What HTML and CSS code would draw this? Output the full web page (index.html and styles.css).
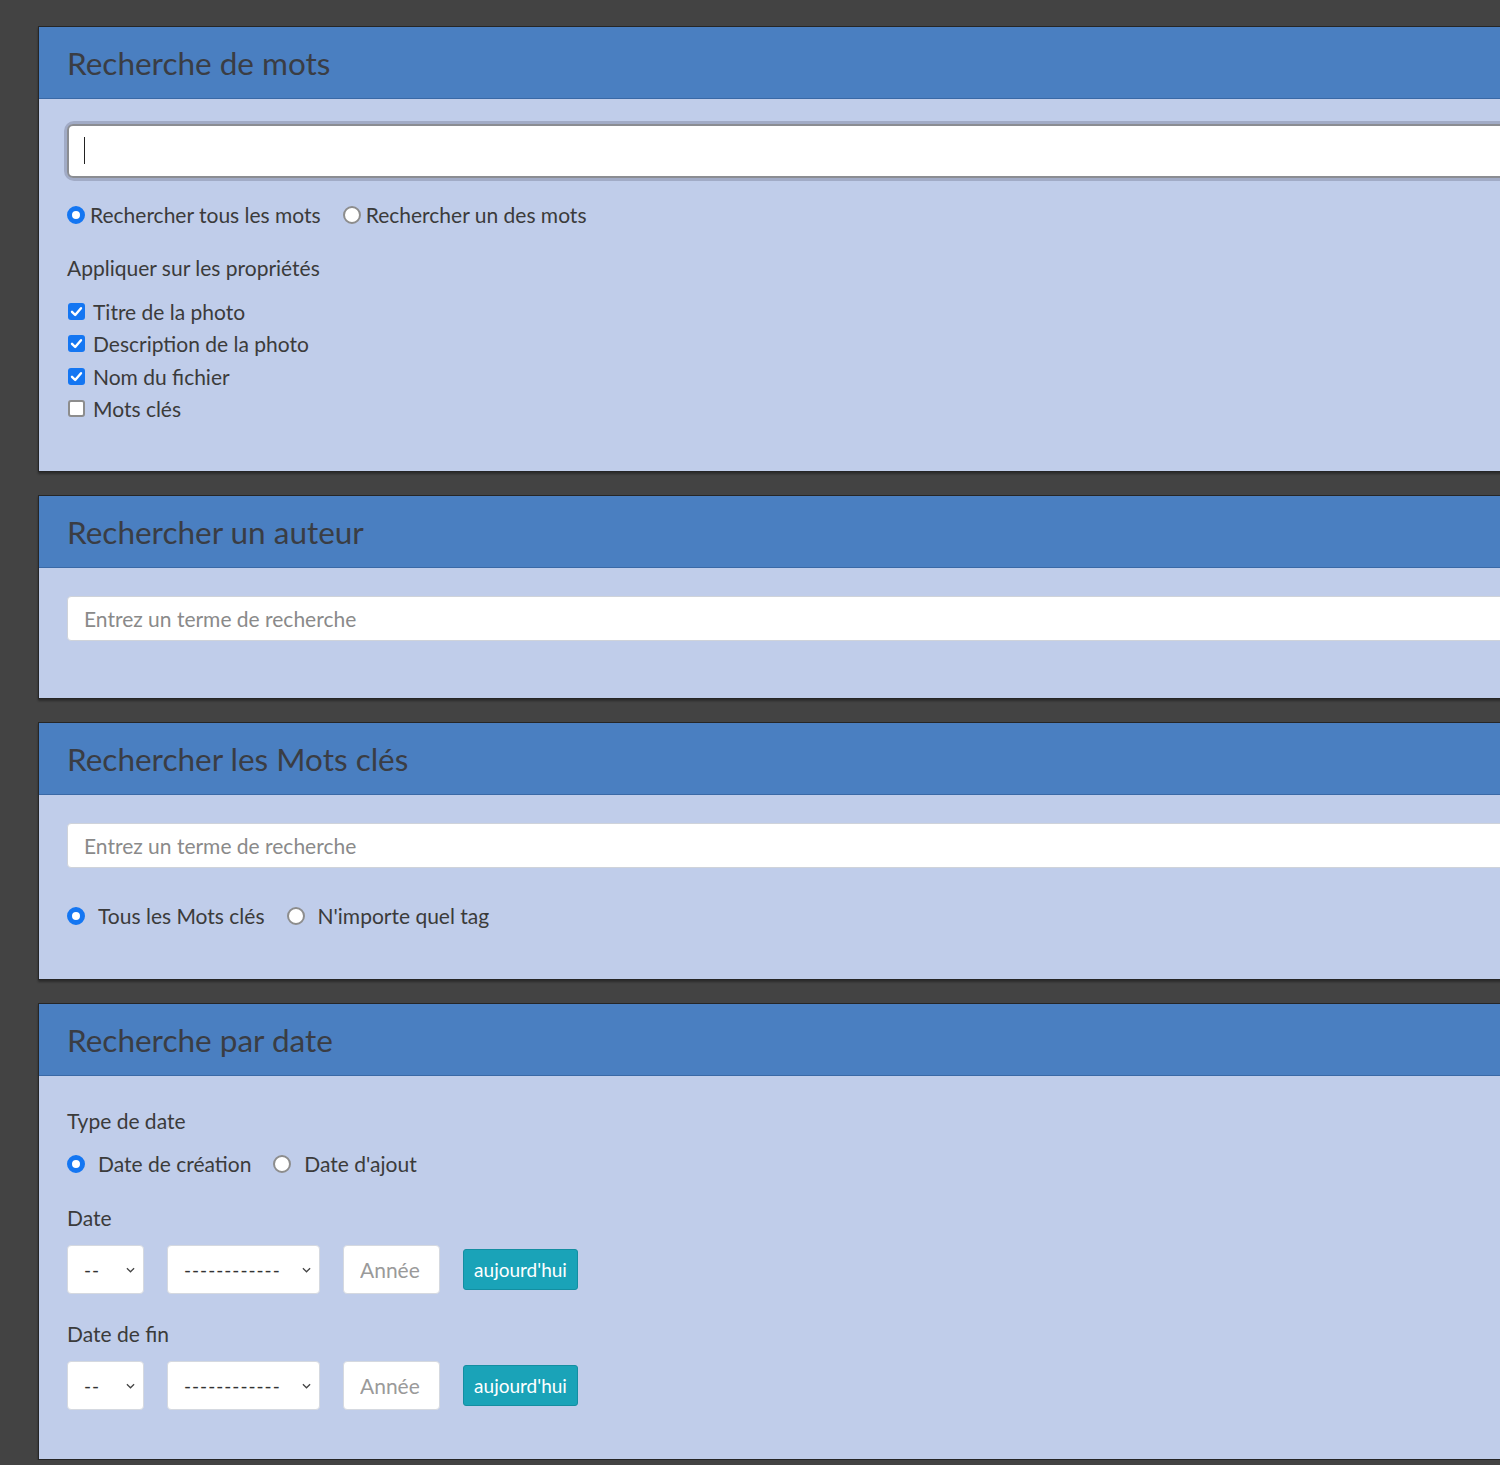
FILE: index.html
```html
<!DOCTYPE html>
<html lang="fr">
<head>
<meta charset="utf-8">
<title>Recherche</title>
<link rel="stylesheet" href="styles.css">
</head>
<body>
<div class="page">

  <section class="panel panel-words">
    <h2 class="panel-title">Recherche de mots</h2>
    <div class="panel-body">
      <div class="input-focus"><input class="text-input big" type="text" value=""><span class="caret"></span></div>
      <div class="radio-row row-words">
        <label class="opt tight"><input type="radio" name="w" checked><span>Rechercher tous les mots</span></label>
        <label class="opt tight"><input type="radio" name="w"><span>Rechercher un des mots</span></label>
      </div>
      <div class="field-label apply">Appliquer sur les propriétés</div>
      <div class="checks">
        <label class="check"><input type="checkbox" checked><span>Titre de la photo</span></label>
        <label class="check"><input type="checkbox" checked><span>Description de la photo</span></label>
        <label class="check"><input type="checkbox" checked><span>Nom du fichier</span></label>
        <label class="check"><input type="checkbox"><span>Mots clés</span></label>
      </div>
    </div>
  </section>

  <section class="panel panel-author">
    <h2 class="panel-title">Rechercher un auteur</h2>
    <div class="panel-body">
      <input class="text-input" type="text" placeholder="Entrez un terme de recherche">
    </div>
  </section>

  <section class="panel panel-tags">
    <h2 class="panel-title">Rechercher les Mots clés</h2>
    <div class="panel-body">
      <input class="text-input" type="text" placeholder="Entrez un terme de recherche">
      <div class="radio-row row-tags">
        <label class="opt"><input type="radio" name="t" checked><span>Tous les Mots clés</span></label>
        <label class="opt"><input type="radio" name="t"><span>N'importe quel tag</span></label>
      </div>
    </div>
  </section>

  <section class="panel panel-date">
    <h2 class="panel-title">Recherche par date</h2>
    <div class="panel-body">
      <div class="field-label first">Type de date</div>
      <div class="radio-row row-type">
        <label class="opt"><input type="radio" name="d" checked><span>Date de création</span></label>
        <label class="opt"><input type="radio" name="d"><span>Date d'ajout</span></label>
      </div>
      <div class="field-label date-label">Date</div>
      <div class="date-row">
        <select class="sel sel-day"><option>--</option></select>
        <select class="sel sel-month"><option>------------</option></select>
        <input class="year" type="text" placeholder="Année">
        <button class="today" type="button">aujourd'hui</button>
      </div>
      <div class="field-label end-label">Date de fin</div>
      <div class="date-row">
        <select class="sel sel-day"><option>--</option></select>
        <select class="sel sel-month"><option>------------</option></select>
        <input class="year" type="text" placeholder="Année">
        <button class="today" type="button">aujourd'hui</button>
      </div>
    </div>
  </section>

</div>
</body>
</html>
```
FILE: styles.css
```css
* { box-sizing: border-box; }

html, body {
  margin: 0;
  padding: 0;
  background: #434343;
  overflow: hidden;
}

body {
  font-family: Lato, "Open Sans", "Liberation Sans", sans-serif;
  color: #3b3b3b;
}

.page {
  display: flex;
  flex-direction: column;
  gap: 23px;
  padding: 26px 0 0 38px;
  margin-right: -20px;
}

.panel {
  background: #c0cdea;
  border: 1px solid #262626;
  border-right: none;
  box-shadow: 0 2px 2px rgba(0,0,0,0.35);
}

.panel-title {
  margin: 0;
  height: 72px;
  line-height: 72px;
  padding-left: 28px;
  background: #4a7fc1;
  border-bottom: 1px solid #3a69a6;
  font-size: 31.5px;
  font-weight: 400;
  color: #3a3d44;
}

.panel-body {
  padding: 0 0 0 28px;
  display: flex;
  flex-direction: column;
  align-items: flex-start;
}

/* Panel 1 */
.panel-words .panel-body { padding-top: 25px; padding-bottom: 46px; }

.input-focus {
  position: relative;
  width: 100%;
  border-radius: 7px;
  box-shadow: 0 0 0 3px #a1abc6;
}

.text-input {
  display: block;
  width: 100%;
  height: 45px;
  border: 1px solid #cfd3da;
  border-radius: 4px;
  background: #fff;
  padding: 0 16px;
  font-family: inherit;
  font-size: 21px;
  color: #333;
  outline: none;
}

.text-input::placeholder { color: #8a8a8a; }

.text-input.big {
  height: 54px;
  border: 2px solid #8b8d92;
  border-radius: 6px;
}

.caret {
  position: absolute;
  left: 17px;
  top: 13px;
  width: 1px;
  height: 27px;
  background: #222;
}

.radio-row {
  display: flex;
  align-items: center;
  height: 24px;
}

.row-words { margin-top: 25px; gap: 22px; }

.opt {
  display: flex;
  align-items: center;
  gap: 13px;
  font-size: 21px;
  line-height: 24px;
  white-space: nowrap;
}

.opt.tight { gap: 5px; }

.opt input {
  appearance: none;
  -webkit-appearance: none;
  margin: 0;
  width: 18px;
  height: 18px;
  border-radius: 50%;
  background: #fff;
  border: 2px solid #8d8d8d;
  flex: none;
}

.opt input:checked {
  border: 5px solid #1476f2;
  background: #fff;
}

.field-label {
  font-size: 21px;
  line-height: 24px;
  height: 24px;
}

.apply { margin-top: 29px; }

.checks {
  margin-top: 15px;
  display: flex;
  flex-direction: column;
}

.check {
  display: flex;
  align-items: center;
  gap: 8px;
  height: 32.5px;
  font-size: 21px;
  white-space: nowrap;
}

.check input {
  appearance: none;
  -webkit-appearance: none;
  margin: 0 0 0 1px;
  width: 17px;
  height: 17px;
  border-radius: 3px;
  background: #fff;
  border: 2px solid #8d8d8d;
  flex: none;
}

.check input:checked {
  border: none;
  background: #1476f2 url("data:image/svg+xml;utf8,<svg xmlns='http://www.w3.org/2000/svg' viewBox='0 0 17 17'><path d='M4 8.8 L7.2 12 L13 5.2' fill='none' stroke='white' stroke-width='2.4' stroke-linecap='round' stroke-linejoin='round'/></svg>") center/17px 17px no-repeat;
}

/* Panel 2 */
.panel-author .panel-body { padding-top: 28px; padding-bottom: 57px; }

/* Panel 3 */
.panel-tags .panel-body { padding-top: 28px; padding-bottom: 51px; }
.row-tags { margin-top: 36px; gap: 22px; }

/* Panel 4 */
.panel-date .panel-body { padding-top: 33px; padding-bottom: 49px; }
.row-type { margin-top: 19px; gap: 22px; }
.date-label { margin-top: 30px; }
.end-label { margin-top: 28px; }

.date-row {
  margin-top: 15px;
  display: flex;
  align-items: center;
  gap: 23px;
  height: 49px;
}

.sel {
  appearance: none;
  -webkit-appearance: none;
  height: 49px;
  border: 1px solid #d5d9e0;
  border-radius: 4px;
  background: #fff url("data:image/svg+xml;utf8,<svg xmlns='http://www.w3.org/2000/svg' viewBox='0 0 10 6'><path d='M1 1 L5 5 L9 1' fill='none' stroke='%23444' stroke-width='1.4'/></svg>") right 8px center/9px 6px no-repeat;
  padding: 0 0 0 16px;
  font-family: inherit;
  font-size: 19px;
  letter-spacing: 1px;
  color: #333;
}

.sel-day { width: 77px; }
.sel-month { width: 153px; }

.year {
  width: 97px;
  height: 49px;
  border: 1px solid #d5d9e0;
  border-radius: 4px;
  background: #fff;
  padding: 0 0 0 16px;
  font-family: inherit;
  font-size: 21px;
  outline: none;
}

.year::placeholder { color: #9a9a9a; }

.today {
  width: 115px;
  height: 41px;
  border: 1px solid #148ea1;
  border-radius: 3px;
  background: #1aa3b8;
  color: #fff;
  font-family: inherit;
  font-size: 19px;
  padding: 0;
}
```
